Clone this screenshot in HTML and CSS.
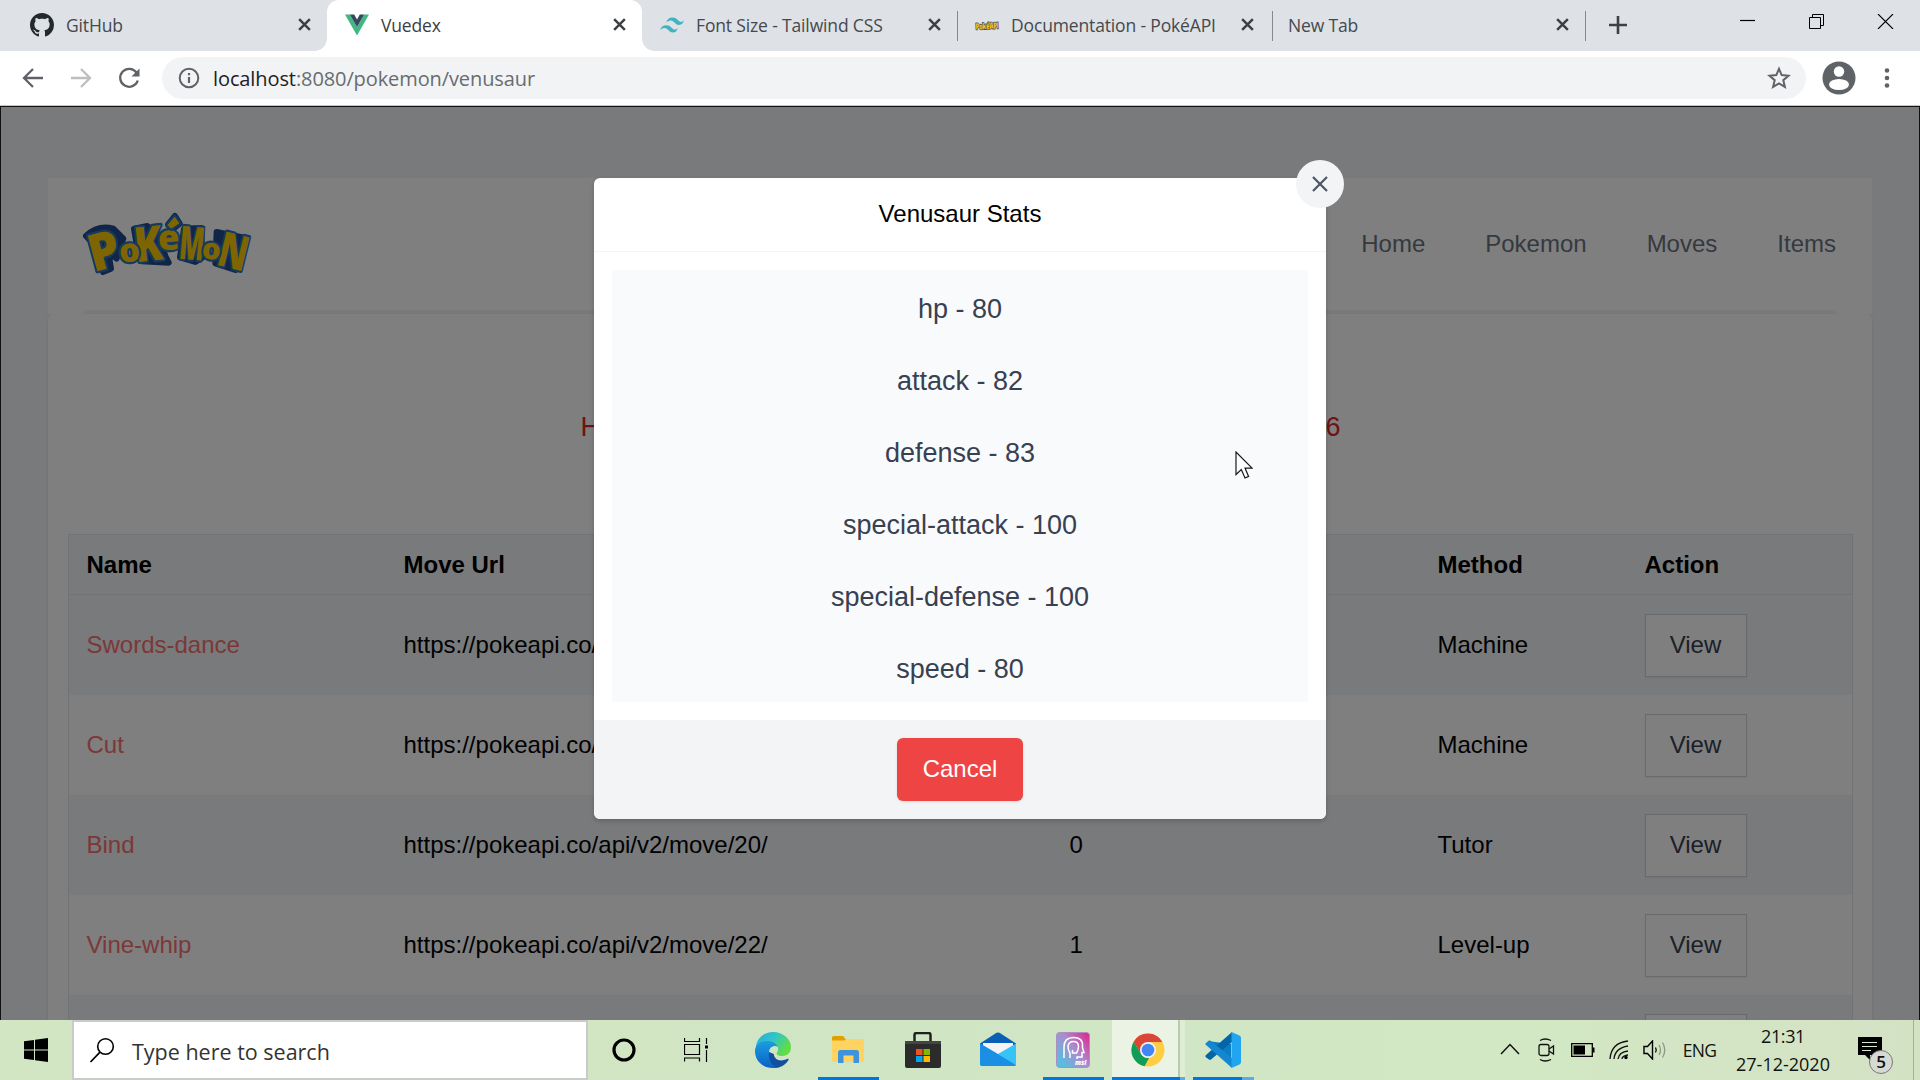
FILE: index.html
```html
<!DOCTYPE html>
<html lang="en">
<head>
<meta charset="utf-8">
<title>Vuedex</title>
<link rel="stylesheet" href="styles.css">
</head>
<body>
<svg width="0" height="0" class="defs">
  <defs>
    <symbol id="x" viewBox="0 0 14 14"><path d="M2 2L12 12M12 2L2 12" stroke="#3c4043" stroke-width="2.3" fill="none"/></symbol>
  </defs>
</svg>

<div class="window">
  <div class="tabstrip">
    <div class="tab">
      <svg class="fav" viewBox="0 0 16 16"><path fill="#24292e" fill-rule="evenodd" d="M8 0C3.58 0 0 3.58 0 8c0 3.54 2.29 6.53 5.47 7.59.4.07.55-.17.55-.38 0-.19-.01-.82-.01-1.49-2.01.37-2.53-.49-2.69-.94-.09-.23-.48-.94-.82-1.13-.28-.15-.68-.52-.01-.53.63-.01 1.08.58 1.23.82.72 1.21 1.87.87 2.33.66.07-.52.28-.87.51-1.07-1.78-.2-3.64-.89-3.64-3.95 0-.87.31-1.59.82-2.15-.08-.2-.36-1.02.08-2.12 0 0 .67-.21 2.2.82.64-.18 1.32-.27 2-.27s1.36.09 2 .27c1.53-1.04 2.2-.82 2.2-.82.44 1.1.16 1.92.08 2.12.51.56.82 1.27.82 2.15 0 3.07-1.87 3.75-3.65 3.95.29.25.54.73.54 1.48 0 1.07-.01 1.93-.01 2.2 0 .21.15.46.55.38A8.01 8.01 0 0016 8c0-4.42-3.58-8-8-8z"/></svg>
      <span class="tab-title">GitHub</span><svg class="tab-x"><use href="#x"/></svg>
    </div>
    <div class="tab active">
      <svg class="fav" viewBox="0 0 24 24"><path fill="#41b883" d="M0 1.6h4.8L12 14 19.200 1.600H24L12 22.400z"/><path fill="#35495e" d="M4.800 1.600h4.400L12 6.400l2.800-4.800h4.400L12 14z"/></svg>
      <span class="tab-title">Vuedex</span><svg class="tab-x"><use href="#x"/></svg>
    </div>
    <div class="tab sep">
      <svg class="fav" viewBox="0 0 24 24"><path fill="#3fb3c0" d="M6 9.600q1.500-6 7.500-6c6 0 6.750 4.500 9.750 5.250q3 .3 4.500-2.250q-1.500 6-6 6c-4.500 0-6-4.500-9-5.250q-3.500-.8-6.750 2.250z" transform="translate(1.500 1.700) scale(.81)"/><path fill="#3fb3c0" d="M6 9.600q1.500-6 7.500-6c6 0 6.750 4.500 9.750 5.250q3 .3 4.500-2.250q-1.500 6-6 6c-4.500 0-6-4.500-9-5.250q-3.500-.8-6.750 2.250z" transform="translate(-4.700 9.300) scale(.81)"/></svg>
      <span class="tab-title">Font Size - Tailwind CSS</span><svg class="tab-x"><use href="#x"/></svg>
    </div>
    <div class="tab sep docs">
      <svg class="fav" viewBox="0 0 24 24"><text x="12" y="16" text-anchor="middle" textLength="23" lengthAdjust="spacingAndGlyphs" font-family="Open Sans" font-weight="800" font-size="8.500" fill="#f5c518" stroke="#3b4a6b" stroke-width="1.600" paint-order="stroke" transform="rotate(-3 12 12)">PokéAPI</text></svg>
      <span class="tab-title">Documentation - PokéAPI</span><svg class="tab-x"><use href="#x"/></svg>
    </div>
    <div class="tab sep blank">
      <span class="tab-title">New Tab</span><svg class="tab-x"><use href="#x"/></svg>
    </div>
    <svg class="new-tab" viewBox="0 0 18 18"><path d="M9 0v18M0 9h18" stroke="#3c4043" stroke-width="2.600"/></svg>
    <div class="win-buttons">
      <svg viewBox="0 0 15 15"><path d="M0 6.500h15" stroke="#000" stroke-width="1.200"/></svg>
      <svg viewBox="0 0 15 15"><path d="M.5 3.500h11v11H.5zM3.500 3.500v-3h11v11h-3" stroke="#000" fill="none"/></svg>
      <svg viewBox="0 0 15 15"><path d="M0 0l15 15M15 0L0 15" stroke="#000" stroke-width="1.100"/></svg>
    </div>
  </div>

  <div class="toolbar">
    <svg class="nav-icon" viewBox="0 0 24 24"><path d="M22 12H3.500M12 3l-9 9 9 9" stroke="#5f6368" stroke-width="2.300" fill="none"/></svg>
    <svg class="nav-icon" viewBox="0 0 24 24"><path d="M2 12h18.500M12 3l9 9-9 9" stroke="#bcbec1" stroke-width="2.300" fill="none"/></svg>
    <svg class="nav-icon" viewBox="0 0 24 24"><path d="M19.500 6.500A9 9 0 1 0 20.800 14.500" stroke="#5f6368" stroke-width="2.300" fill="none"/><path d="M22.500 2.500v8h-8z" fill="#5f6368"/></svg>
    <div class="omnibox">
      <svg class="info" viewBox="0 0 22 22"><circle cx="11" cy="11" r="9.300" fill="none" stroke="#5f6368" stroke-width="2"/><path d="M11 10v6M11 6v2.200" stroke="#5f6368" stroke-width="2.200"/></svg>
      <span class="url"><b>localhost</b>:8080/pokemon/venusaur</span>
      <svg class="star" viewBox="0 0 24 24"><path d="M12 2.800l2.700 6.300 6.800.6-5.200 4.500 1.600 6.700L12 17.300l-5.900 3.600 1.600-6.700-5.200-4.500 6.800-.6z" fill="none" stroke="#5f6368" stroke-width="2"/></svg>
    </div>
    <svg class="avatar" viewBox="0 0 34 34"><circle cx="17" cy="17" r="16.500" fill="#5f6368"/><circle cx="17" cy="10.500" r="5.200" fill="#fff"/><ellipse cx="17" cy="23.500" rx="10" ry="5.500" fill="#fff"/></svg>
    <svg class="dots" viewBox="0 0 6 20"><circle cx="3" cy="2.500" r="2.300" fill="#5f6368"/><circle cx="3" cy="10" r="2.300" fill="#5f6368"/><circle cx="3" cy="17.500" r="2.300" fill="#5f6368"/></svg>
  </div>

  <div class="page">
    <header class="site-header">
      <div class="header-inner">
        <svg class="logo" viewBox="18 18 489 180">
          <g font-family="Open Sans, sans-serif" font-weight="800" text-anchor="middle" stroke-linejoin="round" paint-order="stroke">
            <g fill="#214b8f" stroke="#214b8f" stroke-width="18" aria-hidden="true">
              <path d="M270 50L291 24l14 23-22 17z"/>
              <path d="M24 84Q60 50 106 62l30 30-20 60-25-20 8 50-24 10L46 108z"/>
              <path d="M168 62l40-8 34 30 20 60 10 20-80-4-14-40z"/>
              <path d="M318 62l52-2 2 90-20 12-46-14z"/>
              <path d="M416 72l86 18-30 96-60-20z"/>
            </g>
            <g fill="#ffcb05" stroke="#2a75bb" stroke-width="13">
              <text transform="translate(92 181) rotate(-15) scale(.95 1)" font-size="155">P</text>
              <text transform="translate(216 158) rotate(-6) scale(.85 1)" font-size="145">K</text>
              <text transform="translate(158 161) rotate(-6)" font-size="98">o</text>
              <text transform="translate(274 125) rotate(-4)" font-size="104">e</text>
              <path d="M268 52L290 26l14 20-24 16z"/>
              <text transform="translate(338 155) rotate(5) scale(.56 1)" font-size="138">M</text>
              <text transform="translate(455 180) rotate(14) scale(.72 1)" font-size="145">N</text>
              <text transform="translate(398 154) rotate(6)" font-size="88">o</text>
            </g>
          </g>
        </svg>
        <nav><a>Home</a><a>Pokemon</a><a>Moves</a><a>Items</a></nav>
      </div>
    </header>
    <main class="card">
      <div class="facts"><span>H</span><span>6</span></div>
      <div class="moves">
        <div class="row head"><span>Name</span><span>Move Url</span><span>Level</span><span>Method</span><span>Action</span></div>
        <div class="row"><a>Swords-dance</a><span>https://pokeapi.co/api/v2/move/14/</span><span>0</span><span>Machine</span><button>View</button></div>
        <div class="row"><a>Cut</a><span>https://pokeapi.co/api/v2/move/15/</span><span>0</span><span>Machine</span><button>View</button></div>
        <div class="row"><a>Bind</a><span>https://pokeapi.co/api/v2/move/20/</span><span>0</span><span>Tutor</span><button>View</button></div>
        <div class="row"><a>Vine-whip</a><span>https://pokeapi.co/api/v2/move/22/</span><span>1</span><span>Level-up</span><button>View</button></div>
        <div class="row"><a></a><span></span><span></span><span></span><button></button></div>
      </div>
    </main>

    <div class="overlay">
      <div class="modal">
        <button class="modal-close"><svg viewBox="0 0 16 16"><path d="M1 1l14 14M15 1L1 15" stroke="#4b5563" stroke-width="2.200" fill="none"/></svg></button>
        <div class="modal-title">Venusaur Stats</div>
        <div class="modal-body">
          <ul class="stats">
            <li>hp - 80</li><li>attack - 82</li><li>defense - 83</li><li>special-attack - 100</li><li>special-defense - 100</li><li>speed - 80</li>
          </ul>
        </div>
        <div class="modal-foot"><button class="cancel">Cancel</button></div>
      </div>
    </div>
    <svg class="cursor" viewBox="0 0 18 28"><path d="M1 1v22.500l5.300-5 3.700 8.500 3.600-1.600-3.600-8.300h7z" fill="#fff" stroke="#1a1a1a" stroke-width="1.200"/></svg>
  </div>

  <div class="taskbar">
    <div class="tb-start"><svg width="24" height="24" viewBox="0 0 24 24"><path d="M0 3.300l10-1.400v9.600H0zM11 1.800L24 0v11.500H11zM0 12.500h10v9.600L0 20.700zM11 12.500h13V24l-13-1.800z"/></svg></div>
    <div class="tb-search">
      <svg width="26" height="26" viewBox="0 0 26 26"><circle cx="16.500" cy="9.500" r="7.800" fill="none" stroke="#000" stroke-width="1.600"/><path d="M11 15.200L1.500 25" stroke="#000" stroke-width="1.700"/></svg>
      <span>Type here to search</span>
    </div>
    <div class="tb-sys"><svg width="26" height="26" viewBox="0 0 26 26"><circle cx="13" cy="13" r="10" fill="none" stroke="#000" stroke-width="3.200"/></svg></div>
    <div class="tb-sys"><svg width="24" height="24" viewBox="0 0 24 24"><path d="M.5 0v3.500h15V0M.5 6.500h15v10H.5zM.5 23.500V20h15v3.500M22.500 0v6M22.500 12v12" fill="none" stroke="#000" stroke-width="1.200"/><path d="M21 7.500h3v3h-3z"/></svg></div>
    <div class="tb-apps">
      <div class="app"><svg width="36" height="36" viewBox="0 0 36 36">
        <defs><linearGradient id="eg" x1="0" y1="0" x2="1" y2=".5"><stop offset="0" stop-color="#2aa6e0"/><stop offset=".5" stop-color="#30c5c8"/><stop offset="1" stop-color="#62dd45"/></linearGradient><linearGradient id="eb" x1="0" y1="0" x2="0" y2="1"><stop offset="0" stop-color="#1b9de2"/><stop offset="1" stop-color="#0a62c4"/></linearGradient></defs>
        <path d="M1 14C3 4 11 0 18 0c10 0 18 7 18 15 0 6-4 9-9 9-5 0-6-2-5-3.500 3-4 0-10-7-10-6 0-11 2-14 7z" fill="url(#eg)"/>
        <path d="M0 19C0 13 5 9 12 9c5 0 9 2 11 6-3-2-9-1-9 6s4 14 11 14c-2 1-5 1-7 1C8 36 0 29 0 19z" fill="url(#eb)"/>
        <path d="M14 20c-1 8 3 15 10 15.300 4-1 7.500-4 9.500-7.300.4-1-.4-1.500-1.200-1-7 3-13 1-13.500-5z" fill="#124f9f"/></svg></div>
      <div class="app open"><svg width="34" height="30" viewBox="0 0 34 30"><path d="M1 2.500Q1 1 2.500 1H12l3 3.500V9H1z" fill="#e2a000"/><path d="M1 5.500h12.500L16 4h15.500Q33 4 33 5.500v20q0 1.500-1.500 1.500h-29Q1 27 1 25.500z" fill="#ffd362"/><path d="M7 28V17.500Q7 15 9.500 15h16q2.500 0 2.500 2.500V28h-5.500v-7.500H12.500V28z" fill="#3d93de"/></svg></div>
      <div class="app"><svg width="36" height="36" viewBox="0 0 36 36"><path d="M9.500 10V3Q9.500 1 11.500 1h12q2 0 2 2v7" fill="none" stroke="#202020" stroke-width="2.500"/><path d="M0 9h36v25q0 2-2 2H2q-2 0-2-2z" fill="#2b2b2b"/><path d="M0 9h36v3H0z" fill="#444"/><path d="M11 17h6.500v6H11z" fill="#f25022"/><path d="M18.500 17H25v6h-6.500z" fill="#7fba00"/><path d="M11 24h6.500v6H11z" fill="#00a4ef"/><path d="M18.500 24H25v6h-6.500z" fill="#ffb900"/></svg></div>
      <div class="app mail"><svg width="36" height="34" viewBox="0 0 36 34"><path d="M0 11.500L16.500.8Q18 0 19.500.8L36 11.500V20H0z" fill="#0b5fb4"/><path d="M3 11h30v12H3z" fill="#f4f4f6"/><path d="M0 11.500L18 22l18-10.500V32q0 2-2 2H2q-2 0-2-2z" fill="#38c3f7"/><path d="M0 11.500L36 33q-.6 1-2 1H2q-2 0-2-2z" fill="#1a8fe3"/></svg></div>
      <div class="app open"><svg width="34" height="36" viewBox="0 0 34 36"><defs><linearGradient id="ms" x1="0" y1=".8" x2="1" y2="0"><stop offset="0" stop-color="#4dc3e0"/><stop offset=".5" stop-color="#ad8bcf"/><stop offset="1" stop-color="#e0218a"/></linearGradient></defs><rect x=".5" y=".5" width="33" height="35" rx="3" fill="url(#ms)" stroke="#b08cc0"/><path d="M8 26V15Q8 5.500 17.500 5.500T26.500 14v2l1.500 4.500h-2V25h-5v2" fill="none" stroke="#fff" stroke-width="1.500"/><path d="M14 26v-5Q12 18 12 14.500 12.500 9.500 17.500 9.500t5 5q0 3.500-2 6.500h-4v-3" fill="none" stroke="#fff" stroke-width="1.500"/><text x="19" y="33" font-family="Open Sans" font-weight="800" font-style="italic" font-size="6.500" fill="#fff">msi</text></svg></div>
      <div class="app open current"><svg width="34" height="34" viewBox="0 0 34 34"><circle cx="17" cy="17" r="16.500" fill="#ffcd41"/><path d="M17 9h14.300A16.500 16.500 0 0 0 2.700 8.700L10 21z" fill="#db4437"/><path d="M2.700 8.700L10 21q3 4.500 8 4l-4.500 8.300A16.500 16.500 0 0 1 2.700 8.700z" fill="#109d58"/><circle cx="17" cy="17" r="8" fill="#f1f1f1"/><circle cx="17" cy="17" r="6.300" fill="#4285f4"/></svg></div>
      <div class="app open code"><svg width="36" height="36" viewBox="0 0 36 36"><path d="M26 9v18L2.500 10Q1 8.500 2.500 7.500L4 6.300q1-.6 2 .1z" fill="#0c7dc2" transform="translate(0 3)"/><path d="M27 0v10L6 27.500q-1 .8-2 .1l-3-2.300q-1.200-1 0-2.200z" fill="#0065a9"/><path d="M27 36V26L6 9Q5 8 4 8.600l-3 2.300q-1.200 1 0 2z" fill="#1388d0"/><path d="M26.500 0l8 3.500Q36 4.200 36 6v24q0 1.800-1.500 2.500l-8 3.500z" fill="#22a5f1"/></svg></div>
    </div>
    <div class="tray">
      <div class="t-chev"><svg width="20" height="12" viewBox="0 0 20 12"><path d="M1 11l9-9.500L19 11" fill="none" stroke="#111" stroke-width="1.500"/></svg></div>
      <div class="t-meet"><svg width="18" height="24" viewBox="0 0 18 24"><rect x="1" y="6.500" width="10" height="11" rx="2" fill="none" stroke="#111" stroke-width="1.300"/><path d="M11 11l4.500-3v8L11 13M2 2.500q5-3 11 0M2 21.500q5 3 11 0" fill="none" stroke="#111" stroke-width="1.300"/></svg></div>
      <div class="t-bat"><svg width="24" height="14" viewBox="0 0 24 14"><path d="M.7.700h20.600v12.600H.7z" fill="none" stroke="#000" stroke-width="1.300"/><path d="M2.500 2.500H14v9H2.500zM22 4.500h1.500v5H22z"/></svg></div>
      <div class="t-wifi"><svg width="20" height="20" viewBox="0 0 20 20"><path d="M1 19Q2 3 19 1M5 19Q6 8 19 6M9 19q1-7 10-8M13 19q0-3 6-4" fill="none" stroke="#111" stroke-width="1.300"/><circle cx="17" cy="17.500" r="1.700"/></svg></div>
      <div class="t-vol"><svg width="24" height="20" viewBox="0 0 24 20"><path d="M1 6.500h3.500L9.500 1v18l-5-5.500H1z" fill="none" stroke="#000" stroke-width="1.400"/><path d="M12.500 7.500q1.500 2.500 0 5" fill="none" stroke="#000" stroke-width="1.300"/><path d="M16 5q3 5 0 10M19.500 2.500q4.500 7.500 0 15" fill="none" stroke="#8b9782" stroke-width="1.300"/></svg></div>
      <div class="t-lang">ENG</div>
      <div class="t-clock"><span class="time">21:31</span><span>27-12-2020</span></div>
      <div class="t-note"><svg width="24" height="24" viewBox="0 0 24 24"><path d="M0 0h24v18H12v5l-5-5H0z"/><path d="M4 5.500h15M4 9.500h15M4 13.500h9" stroke="#dbe5d0" stroke-width="1.200"/></svg><span class="badge">5</span></div>
      <div class="t-desk"></div>
    </div>
  </div>
</div>
</body>
</html>
```

FILE: styles.css
```css
* { box-sizing: border-box; }
body { margin: 0; width: 1920px; height: 1080px; overflow: hidden; font-family: "Liberation Sans", Arial, sans-serif; }
svg { display: block; flex: none; }
button { font: inherit; }
.defs { position: absolute; }
.window { display: flex; flex-direction: column; width: 1920px; height: 1080px; }

/* Browser tabs */
.tabstrip { display: flex; height: 51px; flex: none; padding-left: 12px; background: #dee1e6; align-items: flex-start; font-family: "Open Sans", "Noto Sans", sans-serif; font-size: 17.5px; letter-spacing: -0.15px; color: #45494d; }
.tab { position: relative; display: flex; align-items: center; width: 315px; height: 51px; padding: 0 15px 2px 18px; }
.tab.docs { padding-right: 17px; }
.tab.blank { width: 313px; padding-left: 16px; }
.fav { width: 24px; height: 24px; margin-right: 12px; overflow: visible; }
.tab-title { flex: 1; white-space: nowrap; }
.tab-x { width: 15px; height: 15px; }
.tab.active { background: #fff; border-radius: 12px 12px 0 0; color: #3c4043; }
.tab.active::before, .tab.active::after { content: ""; position: absolute; bottom: 0; width: 12px; height: 12px; }
.tab.active::before { left: -12px; background: radial-gradient(circle at 0 0, transparent 11.5px, #fff 12px); }
.tab.active::after { right: -12px; background: radial-gradient(circle at 100% 0, transparent 11.5px, #fff 12px); }
.tab.sep::after { content: ""; position: absolute; right: -1px; top: 11px; width: 1.5px; height: 30px; background: #85888d; }
.new-tab { width: 18px; height: 18px; margin: 16px 0 0 24px; }
.win-buttons { display: flex; margin-left: auto; height: 43px; }
.win-buttons svg { width: 69px; height: 15px; margin-top: 14px; }

/* Address bar */
.toolbar { display: flex; align-items: center; flex: none; height: 55px; padding: 0 0 1px 21px; background: #fff; border-bottom: 1px solid #c4c6c9; }
.nav-icon { width: 24px; height: 24px; margin-right: 24px; }
.omnibox { display: flex; align-items: center; width: 1644px; height: 42px; margin-left: -3px; padding: 0 15px 0 16px; border-radius: 21px; background: #f1f3f4; }
.info { width: 22px; height: 22px; }
.url { flex: 1; margin: 1px 0 0 13px; font-family: "Open Sans", "Noto Sans", sans-serif; font-size: 20px; letter-spacing: -0.1px; color: #686c70; }
.url b { font-weight: 400; color: #202124; }
.star { width: 24px; height: 24px; }
.avatar { width: 34px; height: 34px; margin-left: 16px; }
.dots { width: 6px; height: 20px; margin-left: 28px; }

/* Page */
.page { position: relative; flex: 1; min-height: 0; overflow: hidden; padding: 71px 47px 0; background: #f3f4f6; border: 1px solid #111; border-bottom: 0; font-size: 24px; }
.site-header { height: 136px; padding: 0 36px; background: #fff; }
.header-inner { display: flex; align-items: center; justify-content: space-between; height: 136px; border-bottom: 4px solid #f3f4f6; }
.logo { width: 163px; height: 60px; overflow: visible; }
nav { display: flex; gap: 60px; color: #6b7280; }
.card { height: 760px; padding: 93px 19px 0 20px; background: #fff; border-radius: 6px; box-shadow: 0 1px 3px rgba(0,0,0,.1); }
.facts { display: flex; justify-content: space-between; width: 760px; margin: 0 auto 87px; font-size: 27px; line-height: 40px; color: #dc2626; }
.moves { border: 1px solid #e5e7eb; color: #000; }
.row { display: grid; grid-template-columns: 317px 666px 368px 207px 1fr; align-items: center; justify-items: start; height: 100px; padding-left: 17.5px; background: #f3f4f6; }
.row:nth-child(odd) { background: #fff; }
.row.head { height: 60px; background: #f3f4f6; border-bottom: 1px solid #e5e7eb; font-weight: 700; }
.row a { color: #f87171; }
.row button { width: 102px; height: 63px; padding: 0; background: #fff; border: 1px solid #d1d5db; box-shadow: 0 1px 2px rgba(0,0,0,.06); color: #374151; }

/* Dialog */
.overlay { position: absolute; inset: 0; display: flex; justify-content: center; align-items: flex-start; padding-top: 71px; background: rgba(0,0,0,.5); }
.modal { position: relative; width: 732px; height: 641px; display: flex; flex-direction: column; border-radius: 6px; background: #fff; box-shadow: 0 2px 5px rgba(0,0,0,.2); }
.modal-title { height: 74px; line-height: 71px; text-align: center; border-bottom: 1px solid #f3f4f6; color: #000; }
.modal-body { flex: 1; padding: 18px; }
.stats { list-style: none; margin: 0; padding: 0; height: 432px; background: #f9fafb; color: #374151; font-size: 27px; text-align: center; }
.stats li { height: 72px; line-height: 79px; }
.modal-foot { display: flex; justify-content: center; align-items: center; height: 99px; background: #f3f4f6; border-radius: 0 0 6px 6px; }
.cancel { width: 126px; height: 63px; padding: 0 0 2px; border: 0; border-radius: 6px; background: #ef4444; color: #fff; box-shadow: 0 1px 3px rgba(0,0,0,.1); }
.modal-close { position: absolute; right: -18px; top: -18px; display: flex; align-items: center; justify-content: center; width: 48px; height: 48px; padding: 0; border: 0; border-radius: 50%; background: #f3f4f6; }
.modal-close svg { width: 16px; height: 16px; }
.cursor { position: absolute; left: 1234px; top: 344px; width: 18px; height: 28px; }

/* Taskbar */
.taskbar { display: flex; flex: none; height: 60px; background: linear-gradient(90deg, #d3e6c3, #d0e5c4 50%, #d2e8c4 78%, #d4e2c4); font-family: "Open Sans", "Noto Sans", sans-serif; }
.taskbar > div { display: flex; align-items: center; }
.tb-start { width: 72px; justify-content: center; }
.tb-search { width: 516px; padding-left: 15px; border: 2px solid #c9cbc8; background: #fff; font-size: 21.5px; color: #333; }
.tb-search span { margin: 2px 0 0 17px; white-space: nowrap; }
.tb-sys { width: 72px; justify-content: center; }
.tb-apps { margin-left: 3px; }
.app { position: relative; display: flex; align-items: center; justify-content: center; width: 75px; height: 60px; }
.app.mail { padding-bottom: 2px; }
.app.open::after { content: ""; position: absolute; left: 8px; bottom: 0; width: 61px; height: 3px; background: #0078d7; }
.app.current { background: linear-gradient(90deg, transparent 2px, #ebf3e5 2px, #ebf3e5 68px, #b9cbae 68px, #b9cbae 70px, #dfedd5 70px, #dfedd5 75px); }
.app.open.current::after { left: 2px; width: 73px; background: linear-gradient(90deg, #0078d7 68px, #62aade 68px); }
.app.open.code::after { background: linear-gradient(90deg, #0078d7 49px, #62aade 49px); }
.tray { margin-left: auto; color: #111; }
.tray > div { display: flex; align-items: center; justify-content: center; height: 60px; }
.t-chev { width: 38px; padding-bottom: 2px; }
.t-meet { width: 36px; }
.t-bat { width: 35px; }
.t-wifi { width: 37px; }
.t-vol { width: 35px; }
.t-lang { width: 55px; font-size: 17.5px; letter-spacing: -0.7px; }
.t-clock { width: 112px; flex-direction: column; font-size: 18px; letter-spacing: 0; line-height: 28px; }
.time { letter-spacing: -0.4px; }
.t-note { position: relative; width: 62px; padding-bottom: 2px; }
.badge { position: absolute; left: 30px; top: 30px; width: 24px; height: 24px; border: 1px solid #777; border-radius: 50%; background: #d7dad2; font-size: 17px; font-weight: 600; line-height: 22px; text-align: center; }
.t-desk { width: 7px; margin-left: 12px; border-left: 1.5px solid #a3b09a; }
```
